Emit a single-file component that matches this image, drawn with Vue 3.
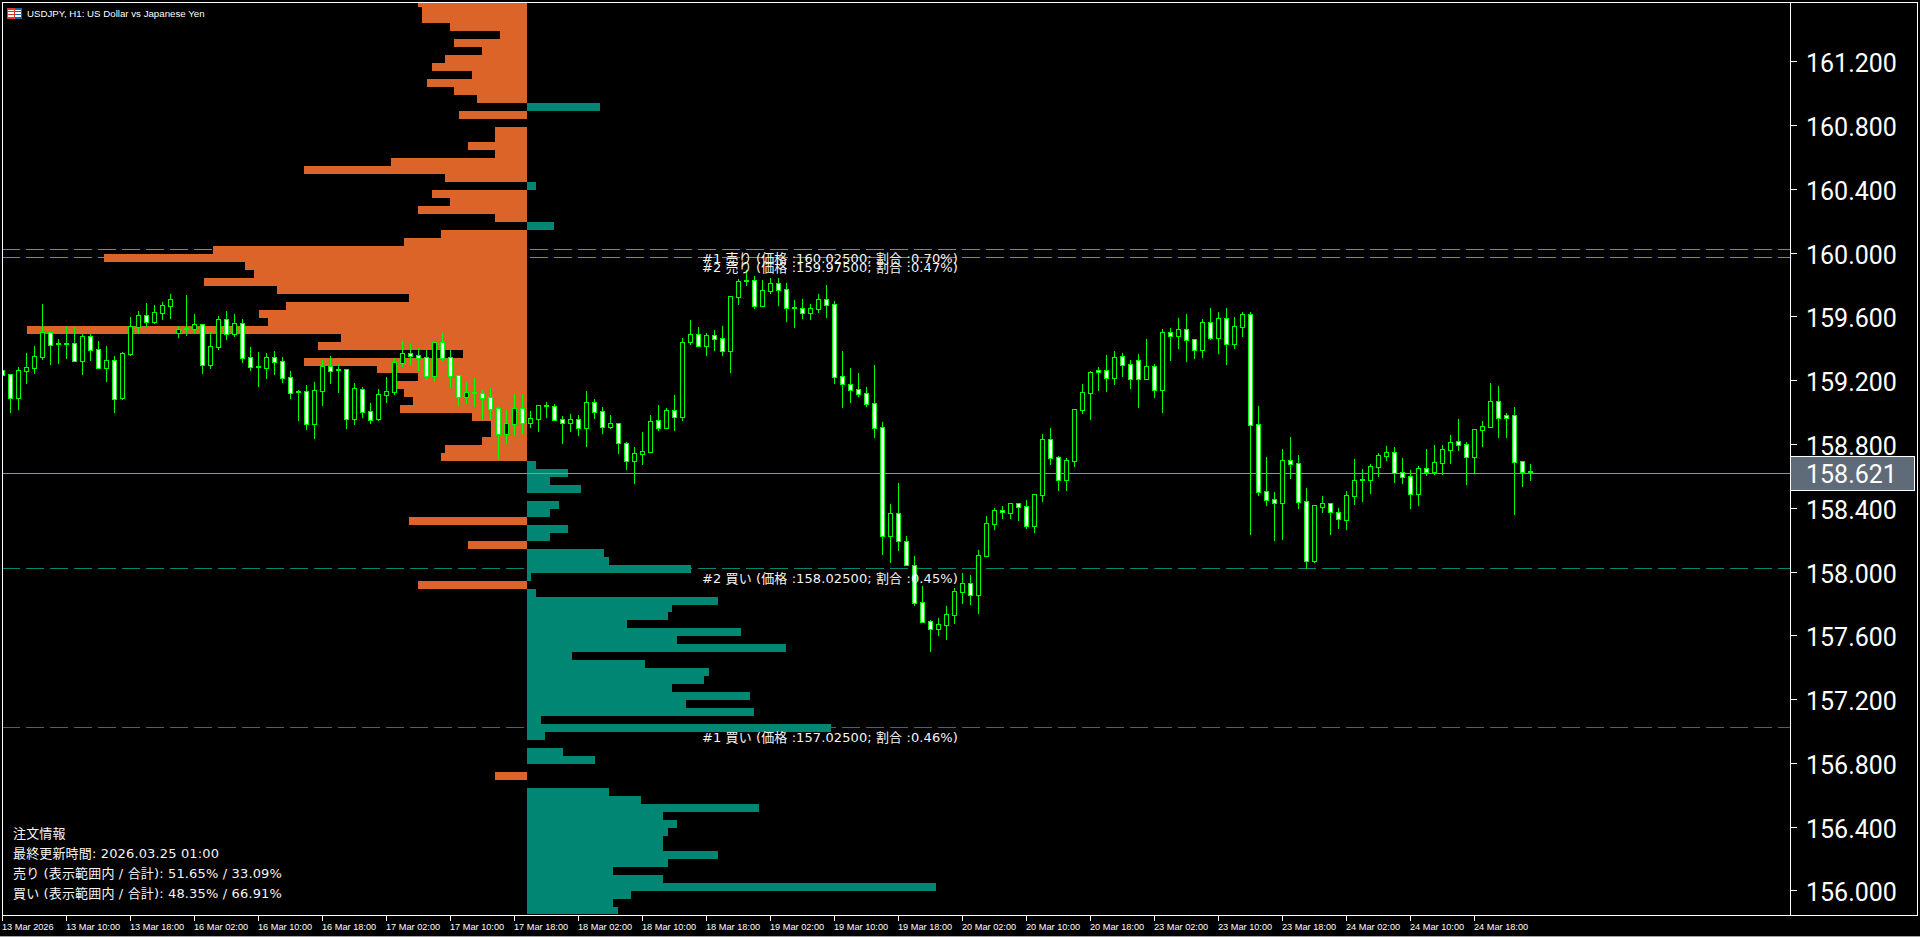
<script setup>
// volume profile rows: [top y, edge x]. edge left of the pivot = sell, right = buy
const PIVOT = 527
const rawRows = [
  [3,418],[7,422],[15,422],[23,450],[31,500],[39,454],[47,482],[55,445],[63,432],[71,472],[79,427],[87,454],[95,477],
  [103,600],[111,459],[119,527],[127,495],[135,495],[142,468],[150,495],[158,391],[166,304],[174,445],[182,536],
  [190,432],[198,450],[206,418],[214,495],[222,554],[230,441],[238,404],[246,213],[254,104],[262,245],[270,254],
  [278,204],[286,277],[294,409],[302,286],[310,259],[318,268],[326,27],[334,341],[342,318],[350,463],[358,304],
  [366,377],[373,418],[381,395],[389,404],[397,413],[405,400],[413,472],[421,491],[429,491],[437,482],[445,445],
  [453,441],[461,536],[469,568],[477,550],[485,581],[493,527],[501,559],[509,550],[517,409],[525,568],[533,550],
  [541,468],[549,604],[557,609],[565,691],[573,531],[581,418],[589,536],[597,718],[605,672],[612,668],[620,627],
  [628,741],[636,677],[644,786],[652,572],[660,645],[668,709],[676,704],[684,672],[692,750],[700,686],[708,754],
  [716,541],[724,831],[732,545],[740,527],[748,563],[756,595],[764,527],[772,495],[780,527],[788,609],[796,641],
  [804,759],[812,663],[820,677],[828,668],[836,663],[844,663],[851,718],[859,668],[867,613],[875,663],[883,936],
  [891,631],[899,613],[907,618],[915,527]
]

const rows = rawRows.slice(0, -1).map(([y, edge], i) => ({
  y,
  h: rawRows[i + 1][0] - y,
  x: Math.min(edge, PIVOT),
  w: Math.abs(edge - PIVOT),
  sell: edge < PIVOT
}))

// candles: [high, body top, body bottom, low, down bar]
const rawCandles = [
  [365,370,375,383,1],[374,374,398,412,1],[367,370,398,409,0],[353,367,371,383,0],[346,356,368,373,0],[304,332,357,359,0],
  [332,332,345,364,1],[339,343,344,363,1],[326,343,344,358,1],[327,343,361,361,1],[334,336,361,374,0],[334,336,350,360,1],
  [341,349,368,368,1],[346,360,368,381,0],[356,360,399,412,1],[352,353,398,399,0],[317,326,354,355,0],[311,315,327,333,0],
  [303,315,322,326,1],[305,312,322,323,0],[302,305,313,319,0],[294,299,306,318,0],[326,329,333,337,0],[295,328,329,335,1],
  [314,324,329,333,0],[324,324,365,373,1],[332,346,365,368,0],[316,319,347,349,0],[311,319,334,339,1],[314,323,334,336,0],
  [319,323,358,362,1],[347,357,367,370,1],[352,366,367,386,1],[353,357,368,378,0],[351,357,362,374,1],[357,361,378,382,1],
  [371,377,393,398,1],[390,391,392,420,1],[385,391,424,429,1],[382,390,424,438,0],[360,366,391,405,0],[356,366,371,383,1],
  [364,369,370,392,1],[369,369,419,428,1],[383,388,419,424,0],[387,389,412,417,1],[403,411,420,423,1],[389,394,419,420,0],
  [377,391,395,402,0],[358,362,392,394,0],[341,353,363,366,0],[344,353,356,364,1],[348,355,358,370,1],[349,357,376,379,1],
  [342,342,376,380,0],[333,342,358,360,1],[349,357,376,387,1],[375,375,397,405,1],[382,392,397,403,0],[378,392,393,406,1],
  [390,393,398,419,1],[388,397,409,419,1],[407,408,434,458,1],[410,423,434,443,0],[394,408,424,435,0],[394,408,423,433,1],
  [411,418,423,427,0],[405,405,419,431,0],[402,405,406,417,1],[404,406,420,420,1],[416,419,423,443,1],[414,419,423,431,0],
  [415,419,428,435,1],[391,402,428,446,0],[399,402,412,418,1],[407,411,427,433,1],[415,423,427,428,0],[423,423,443,453,1],
  [442,443,461,469,1],[447,453,461,483,0],[432,451,454,464,0],[415,421,452,452,0],[405,420,428,430,1],[408,410,428,428,0],
  [395,410,417,430,1],[338,342,417,420,0],[320,334,342,344,0],[327,334,346,346,1],[333,335,346,355,0],[330,335,339,350,1],
  [326,338,351,355,1],[296,296,351,372,0],[279,281,297,304,0],[270,280,281,285,1],[276,280,306,308,1],[280,290,306,306,0],
  [278,283,291,293,0],[278,283,290,305,1],[283,289,308,321,1],[300,307,308,327,1],[299,308,313,318,1],[304,308,313,319,0],
  [294,299,309,312,0],[285,299,305,317,1],[301,304,377,383,1],[351,376,384,407,1],[368,384,390,402,1],[373,389,394,396,1],
  [387,393,404,406,1],[365,403,428,437,1],[422,427,536,554,1],[504,513,536,562,0],[483,513,541,550,1],[536,541,565,565,1],
  [556,565,603,605,1],[586,602,622,622,1],[620,621,629,651,1],[618,624,629,635,0],[606,614,625,639,0],[588,591,615,623,0],
  [573,583,592,603,0],[575,583,595,604,1],[550,555,595,613,0],[516,523,556,556,0],[508,510,524,529,0],[506,510,512,518,1],
  [503,503,513,518,0],[503,503,507,520,1],[500,506,526,528,1],[494,494,526,532,0],[434,439,495,501,0],[428,439,458,464,1],
  [456,457,480,490,1],[458,460,480,490,0],[409,409,461,466,0],[384,392,410,413,0],[371,372,393,419,0],[367,370,372,390,1],
  [355,370,378,391,1],[351,357,378,384,0],[353,356,365,376,1],[360,364,379,388,1],[354,360,379,407,1],[339,366,379,379,0],
  [364,366,390,397,1],[329,332,390,412,0],[328,332,336,360,1],[318,329,336,348,0],[314,329,340,361,1],[339,339,350,358,1],
  [319,322,350,357,0],[308,322,338,339,1],[312,318,338,353,0],[308,318,344,364,1],[317,326,344,348,0],[312,314,327,336,0],
  [312,314,425,534,1],[406,424,492,495,1],[457,491,500,505,1],[492,499,503,540,1],[449,460,503,539,0],[437,460,464,478,1],
  [455,463,502,508,1],[488,501,561,568,1],[505,505,561,562,0],[496,503,507,512,0],[503,503,512,534,1],[508,512,519,528,1],
  [491,495,520,529,0],[459,480,496,504,0],[469,479,480,501,1],[464,466,480,493,0],[453,455,467,476,0],[446,452,456,460,0],
  [447,452,473,482,1],[458,472,477,483,1],[470,476,494,508,1],[466,468,494,505,0],[449,468,472,475,1],[445,462,472,474,0],
  [445,449,463,474,0],[435,442,450,463,0],[419,441,445,450,1],[442,444,457,484,1],[429,429,457,473,0],[421,426,430,446,0],
  [383,401,427,427,0],[386,401,418,437,1],[413,415,418,437,1],[407,415,462,514,1],[461,461,472,486,1],[464,471,472,480,1]
]

const candles = rawCandles.map(([high, top, bottom, low, down], i) => ({
  x: 2 + 8 * i,
  high,
  low,
  top,
  bodyH: bottom - top + 1,
  down: !!down
}))

const dashedLines = [
  { y: 249, color: '#d5693a' },
  { y: 257, color: '#d5693a' },
  { y: 568, color: '#008672' },
  { y: 727, color: '#008672' }
]

const labels = [
  { y: 259, text: '#1 売り (価格 :160.02500; 割合 :0.70%)' },
  { y: 268, text: '#2 売り (価格 :159.97500; 割合 :0.47%)' },
  { y: 579, text: '#2 買い (価格 :158.02500; 割合 :0.45%)' },
  { y: 738, text: '#1 買い (価格 :157.02500; 割合 :0.46%)' }
]

const infoLines = [
  '注文情報',
  '最終更新時間: 2026.03.25 01:00',
  '売り (表示範囲内 / 合計): 51.65% / 33.09%',
  '買い (表示範囲内 / 合計): 48.35% / 66.91%'
]

const prices = ['161.200', '160.800', '160.400', '160.000', '159.600', '159.200', '158.800', '158.400', '158.000', '157.600', '157.200', '156.800', '156.400', '156.000']

const times = [
  '13 Mar 2026', '13 Mar 10:00', '13 Mar 18:00', '16 Mar 02:00', '16 Mar 10:00', '16 Mar 18:00',
  '17 Mar 02:00', '17 Mar 10:00', '17 Mar 18:00', '18 Mar 02:00', '18 Mar 10:00', '18 Mar 18:00',
  '19 Mar 02:00', '19 Mar 10:00', '19 Mar 18:00', '20 Mar 02:00', '20 Mar 10:00', '20 Mar 18:00',
  '23 Mar 02:00', '23 Mar 10:00', '23 Mar 18:00', '24 Mar 02:00', '24 Mar 10:00', '24 Mar 18:00'
]
</script>

<template>
  <div class="screen">
    <div class="frame">
      <div class="chart">
        <svg class="plot" width="1787" height="911" viewBox="3 3 1787 911" shape-rendering="crispEdges">
          <line
            v-for="line in dashedLines"
            :key="line.y"
            x1="2"
            x2="1790"
            :y1="line.y + 0.5"
            :y2="line.y + 0.5"
            :stroke="line.color"
            stroke-dasharray="18 6"
          />
          <rect
            v-for="row in rows"
            :key="row.y"
            :x="row.x"
            :y="row.y"
            :width="row.w"
            :height="row.h"
            :fill="row.sell ? '#dc6428' : '#008672'"
          />
          <line x1="3" x2="1790" y1="473.5" y2="473.5" stroke="#8d949e" />
          <g v-for="c in candles" :key="c.x">
            <rect :x="c.x" :y="c.high" width="1" :height="c.low - c.high + 1" fill="#00ff00" />
            <rect :x="c.x - 2" :y="c.top" width="5" :height="c.bodyH" fill="#00ff00" />
            <rect
              v-if="c.bodyH > 2"
              :x="c.x - 1"
              :y="c.top + 1"
              width="3"
              :height="c.bodyH - 2"
              :fill="c.down ? '#ffffff' : '#000000'"
            />
          </g>
        </svg>

        <div class="title">
          <svg width="15" height="11" viewBox="0 0 15 11" shape-rendering="crispEdges">
            <rect width="15" height="11" fill="#ffffff" />
            <rect width="8" height="11" fill="#e0352b" />
            <rect x="8" width="7" height="11" fill="#0f62ac" />
            <rect x="1" y="2" width="6" height="1" fill="#ffffff" />
            <rect x="1" y="4" width="6" height="2" fill="#ffffff" />
            <rect x="1" y="7" width="6" height="2" fill="#ffffff" />
            <rect x="8" y="2" width="6" height="1" fill="#ffffff" />
            <rect x="8" y="4" width="6" height="2" fill="#ffffff" />
            <rect x="8" y="7" width="6" height="2" fill="#ffffff" />
          </svg>
          <span>USDJPY, H1:  US Dollar vs Japanese Yen</span>
        </div>

        <div
          v-for="label in labels"
          :key="label.text"
          class="level-label"
          :style="{ top: label.y - 11 + 'px' }"
        >{{ label.text }}</div>

        <div class="info">
          <div v-for="line in infoLines" :key="line">{{ line }}</div>
        </div>
      </div>

      <div class="price-axis">
        <div v-for="p in prices" :key="p" class="price-row">
          <span class="price-tick"></span>
          <span class="price-text">{{ p }}</span>
        </div>
        <div class="price-tag">158.621</div>
      </div>
    </div>

    <div class="time-axis">
      <div v-for="t in times" :key="t" class="time-cell">
        <span class="time-tick"></span>
        <span class="time-text">{{ t }}</span>
      </div>
    </div>
    <div class="bottom-edge"></div>
  </div>
</template>

<style scoped>
.screen {
  width: 1920px;
  height: 937px;
  box-sizing: border-box;
  padding-top: 2px;
  background: #000;
  color: #fff;
  display: flex;
  flex-direction: column;
  overflow: hidden;
}

.frame {
  margin-left: 2px;
  width: 1916px;
  height: 914px;
  box-sizing: border-box;
  border: 1px solid #fff;
  display: flex;
  flex: none;
}

.chart {
  position: relative;
  width: 1787px;
  flex: none;
  overflow: hidden;
}

.plot {
  display: block;
}

.title {
  position: absolute;
  left: 4px;
  top: 5px;
  display: flex;
  align-items: center;
  gap: 5px;
  font: 9.7px/11px "Liberation Sans", sans-serif;
  white-space: pre;
}

.level-label {
  position: absolute;
  left: 699px;
  font: 13px/16px "DejaVu Sans", "Noto Sans CJK JP", sans-serif;
  letter-spacing: 0.1px;
  color: #f4f4f4;
  white-space: pre;
}

.info {
  position: absolute;
  left: 10px;
  bottom: 11px;
  font: 13px/20px "DejaVu Sans", "Noto Sans CJK JP", sans-serif;
  letter-spacing: 0.15px;
  color: #f4f4f4;
  white-space: pre;
}

.price-axis {
  position: relative;
  flex: 1;
  box-sizing: border-box;
  padding-top: 27px;
  border-left: 1px solid #fff;
  overflow: hidden;
  font: 25px/1 Roboto, sans-serif;
}

.price-row {
  height: 63.77px;
  display: flex;
  align-items: center;
  gap: 9px;
}

.price-tick {
  width: 6px;
  height: 1px;
  background: #fff;
}

.price-text {
  padding-top: 4px;
}

.price-tag {
  position: absolute;
  left: 0;
  top: 453px;
  width: 124px;
  height: 35px;
  box-sizing: border-box;
  padding-left: 15px;
  border: solid #fff;
  border-width: 1px 1px 1px 0;
  background: #5f6b78;
  line-height: 35px;
}

.time-axis {
  margin-left: 2px;
  height: 20px;
  display: flex;
  flex: none;
}

.time-cell {
  width: 64px;
  flex: none;
  display: flex;
  flex-direction: column;
}

.time-tick {
  width: 1px;
  height: 5px;
  background: #fff;
}

.time-text {
  font: 9.2px/12px "Liberation Sans", sans-serif;
  white-space: nowrap;
}

.bottom-edge {
  height: 1px;
  background: #a0a0a0;
  flex: none;
}
</style>

<style>
html,
body {
  background: #000;
  overflow: hidden;
}
</style>
